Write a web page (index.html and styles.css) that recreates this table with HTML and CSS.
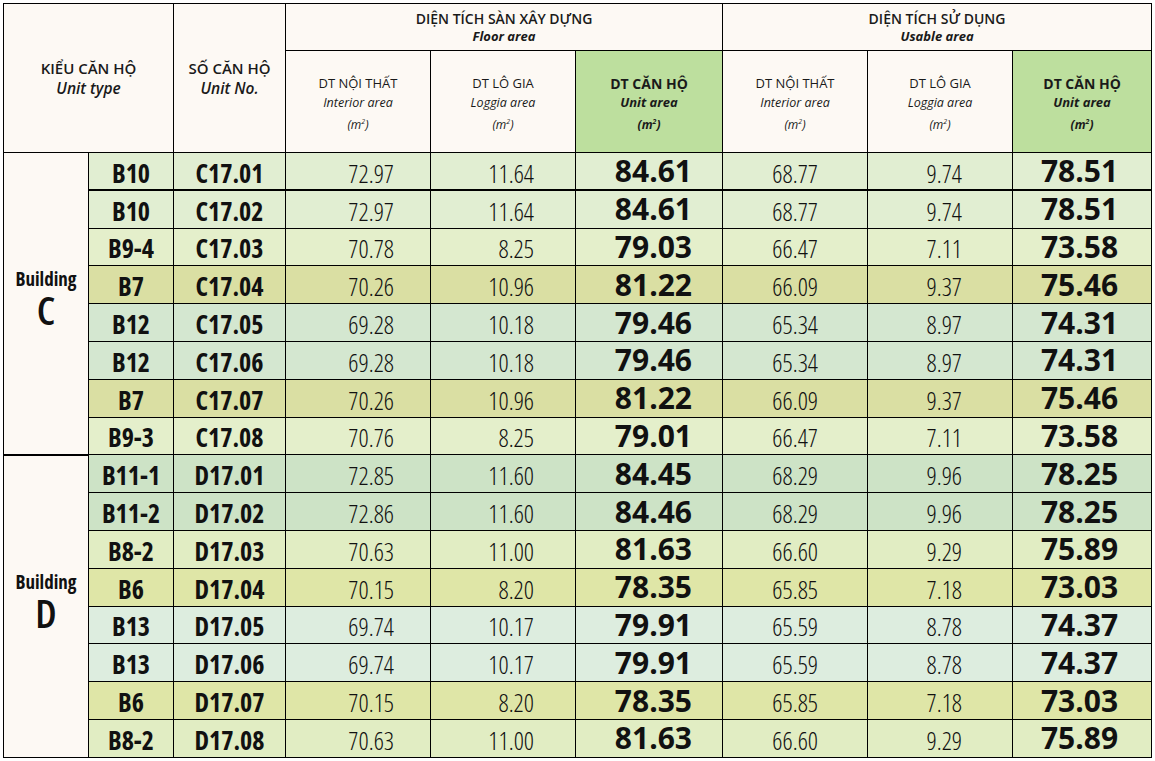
FILE: index.html
```html
<!DOCTYPE html>
<html lang="vi">
<head>
<meta charset="utf-8">
<title>Diện tích căn hộ</title>
<link rel="stylesheet" href="styles.css">
</head>
<body>
<table class="area-table">
  <colgroup>
    <col class="c-bld"><col class="c-type"><col class="c-no">
    <col class="c-val"><col class="c-val"><col class="c-main">
    <col class="c-val"><col class="c-val"><col class="c-last">
  </colgroup>
  <thead>
    <tr class="h1">
      <th colspan="2" rowspan="2" class="head-big"><span class="vn">KIỂU CĂN HỘ</span><span class="en">Unit type</span></th>
      <th rowspan="2" class="head-big"><span class="vn">SỐ CĂN HỘ</span><span class="en">Unit No.</span></th>
      <th colspan="3" class="group"><span class="vn">DIỆN TÍCH SÀN XÂY DỰNG</span><span class="en">Floor area</span></th>
      <th colspan="3" class="group"><span class="vn">DIỆN TÍCH SỬ DỤNG</span><span class="en">Usable area</span></th>
    </tr>
    <tr class="h2">
      <th class="sub"><span class="vn">DT NỘI THẤT</span><span class="en">Interior area</span><span class="unit">(m<sup>2</sup>)</span></th>
      <th class="sub"><span class="vn">DT LÔ GIA</span><span class="en">Loggia area</span><span class="unit">(m<sup>2</sup>)</span></th>
      <th class="sub hl"><span class="vn">DT CĂN HỘ</span><span class="en">Unit area</span><span class="unit">(m<sup>2</sup>)</span></th>
      <th class="sub"><span class="vn">DT NỘI THẤT</span><span class="en">Interior area</span><span class="unit">(m<sup>2</sup>)</span></th>
      <th class="sub"><span class="vn">DT LÔ GIA</span><span class="en">Loggia area</span><span class="unit">(m<sup>2</sup>)</span></th>
      <th class="sub hl"><span class="vn">DT CĂN HỘ</span><span class="en">Unit area</span><span class="unit">(m<sup>2</sup>)</span></th>
    </tr>
  </thead>
  <tbody>
    <tr class="r-b10 thick">
      <td rowspan="8" class="bld"><span class="bw">Building</span><span class="bl">C</span></td>
      <td class="ty">B10</td><td class="no">C17.01</td><td class="v1">72.97</td><td class="v2">11.64</td><td class="big v3">84.61</td><td class="v4">68.77</td><td class="v5">9.74</td><td class="big v6">78.51</td>
    </tr>
    <tr class="r-b10"><td class="ty">B10</td><td class="no">C17.02</td><td class="v1">72.97</td><td class="v2">11.64</td><td class="big v3">84.61</td><td class="v4">68.77</td><td class="v5">9.74</td><td class="big v6">78.51</td></tr>
    <tr class="r-b9"><td class="ty">B9-4</td><td class="no">C17.03</td><td class="v1">70.78</td><td class="v2">8.25</td><td class="big v3">79.03</td><td class="v4">66.47</td><td class="v5">7.11</td><td class="big v6">73.58</td></tr>
    <tr class="r-b7"><td class="ty">B7</td><td class="no">C17.04</td><td class="v1">70.26</td><td class="v2">10.96</td><td class="big v3">81.22</td><td class="v4">66.09</td><td class="v5">9.37</td><td class="big v6">75.46</td></tr>
    <tr class="r-b12"><td class="ty">B12</td><td class="no">C17.05</td><td class="v1">69.28</td><td class="v2">10.18</td><td class="big v3">79.46</td><td class="v4">65.34</td><td class="v5">8.97</td><td class="big v6">74.31</td></tr>
    <tr class="r-b12"><td class="ty">B12</td><td class="no">C17.06</td><td class="v1">69.28</td><td class="v2">10.18</td><td class="big v3">79.46</td><td class="v4">65.34</td><td class="v5">8.97</td><td class="big v6">74.31</td></tr>
    <tr class="r-b7"><td class="ty">B7</td><td class="no">C17.07</td><td class="v1">70.26</td><td class="v2">10.96</td><td class="big v3">81.22</td><td class="v4">66.09</td><td class="v5">9.37</td><td class="big v6">75.46</td></tr>
    <tr class="r-b9"><td class="ty">B9-3</td><td class="no">C17.08</td><td class="v1">70.76</td><td class="v2">8.25</td><td class="big v3">79.01</td><td class="v4">66.47</td><td class="v5">7.11</td><td class="big v6">73.58</td></tr>
    <tr class="r-b11">
      <td rowspan="8" class="bld"><span class="bw">Building</span><span class="bl">D</span></td>
      <td class="ty">B11-1</td><td class="no">D17.01</td><td class="v1">72.85</td><td class="v2">11.60</td><td class="big v3">84.45</td><td class="v4">68.29</td><td class="v5">9.96</td><td class="big v6">78.25</td>
    </tr>
    <tr class="r-b11"><td class="ty">B11-2</td><td class="no">D17.02</td><td class="v1">72.86</td><td class="v2">11.60</td><td class="big v3">84.46</td><td class="v4">68.29</td><td class="v5">9.96</td><td class="big v6">78.25</td></tr>
    <tr class="r-b8"><td class="ty">B8-2</td><td class="no">D17.03</td><td class="v1">70.63</td><td class="v2">11.00</td><td class="big v3">81.63</td><td class="v4">66.60</td><td class="v5">9.29</td><td class="big v6">75.89</td></tr>
    <tr class="r-b6"><td class="ty">B6</td><td class="no">D17.04</td><td class="v1">70.15</td><td class="v2">8.20</td><td class="big v3">78.35</td><td class="v4">65.85</td><td class="v5">7.18</td><td class="big v6">73.03</td></tr>
    <tr class="r-b13"><td class="ty">B13</td><td class="no">D17.05</td><td class="v1">69.74</td><td class="v2">10.17</td><td class="big v3">79.91</td><td class="v4">65.59</td><td class="v5">8.78</td><td class="big v6">74.37</td></tr>
    <tr class="r-b13"><td class="ty">B13</td><td class="no">D17.06</td><td class="v1">69.74</td><td class="v2">10.17</td><td class="big v3">79.91</td><td class="v4">65.59</td><td class="v5">8.78</td><td class="big v6">74.37</td></tr>
    <tr class="r-b6"><td class="ty">B6</td><td class="no">D17.07</td><td class="v1">70.15</td><td class="v2">8.20</td><td class="big v3">78.35</td><td class="v4">65.85</td><td class="v5">7.18</td><td class="big v6">73.03</td></tr>
    <tr class="r-b8"><td class="ty">B8-2</td><td class="no">D17.08</td><td class="v1">70.63</td><td class="v2">11.00</td><td class="big v3">81.63</td><td class="v4">66.60</td><td class="v5">9.29</td><td class="big v6">75.89</td></tr>
  </tbody>
</table>
</body>
</html>
```

FILE: styles.css
```css
html, body {
  margin: 0;
  padding: 0;
  background: #ffffff;
}
body {
  padding: 3px 4px 0 3px;
}
.area-table {
  border-collapse: collapse;
  table-layout: fixed;
  width: 1148px;
  font-family: "Open Sans", sans-serif;
  font-stretch: 75%;
  color: #111;
}
.c-bld { width: 85px; }
.c-type { width: 85px; }
.c-no { width: 112px; }
.c-val { width: 145px; }
.c-main { width: 147px; }
.c-last { width: 139px; }

.area-table th,
.area-table td {
  border: 1px solid #000;
  padding: 0;
  text-align: center;
  vertical-align: middle;
}
.area-table th {
  background: #fdf9f4;
  font-family: "Open Sans", "Lato", sans-serif;
  font-stretch: 100%;
  font-weight: 400;
  color: #1a1a1a;
}
.area-table th span { display: block; }
.h1 { height: 47px; }
.h2 { height: 102px; }

.head-big .vn {
  font-size: 15px;
  font-weight: 600;
  line-height: 20px;
}
.head-big .en {
  font-size: 15.5px;
  font-weight: 600;
  font-style: italic;
  line-height: 20px;
}
.group .vn {
  font-size: 14px;
  font-weight: 600;
  line-height: 19px;
}
.group .en {
  font-size: 13px;
  font-weight: 700;
  font-style: italic;
  line-height: 17px;
}
.sub .vn {
  font-size: 13px;
  line-height: 19px;
  padding-top: 4px;
}
.sub .en {
  font-size: 12.5px;
  font-style: italic;
  line-height: 19px;
}
.sub .unit {
  font-size: 12px;
  font-style: italic;
  line-height: 19px;
}
.sub sup {
  font-size: 7px;
  vertical-align: 5px;
}
.sub.hl {
  background: #bddf9e;
}
.sub.hl .vn {
  font-size: 14px;
  font-weight: 700;
}
.sub.hl .en {
  font-size: 13px;
  font-weight: 700;
}
.sub.hl .unit {
  font-weight: 700;
}

.area-table tbody tr { height: 37.8px; }
.area-table tbody td {
  font-size: 25px;
  line-height: 28px;
  font-weight: 350;
  font-stretch: 87%;
  padding-top: 3px;
}
.area-table tbody tr.thick td { border-bottom-width: 2px; }
.area-table td.ty,
.area-table td.no {
  font-weight: 700;
  font-size: 26px;
  font-stretch: 78%;
}
.area-table td.big {
  font-weight: 700;
  font-size: 30px;
  font-stretch: 94%;
  padding-top: 0;
}
.area-table td.v1 { text-align: right; padding-right: 36px; }
.area-table td.v2 { text-align: right; padding-right: 41px; }
.area-table td.v3 { text-align: right; padding-right: 30px; }
.area-table td.v4 { text-align: right; padding-right: 49px; }
.area-table td.v5 { text-align: right; padding-right: 50px; }
.area-table td.v6 { text-align: right; padding-right: 33px; }

.area-table td.bld {
  background: #fdf9f4;
  border-bottom-width: 1px;
  padding: 0 0 12px 0;
}
.bld span { display: block; }
.bw {
  font-size: 19px;
  font-weight: 700;
  font-stretch: 87.5%;
  line-height: 26px;
}
.bl {
  font-size: 40px;
  font-weight: 600;
  font-stretch: 80%;
  line-height: 36px;
}

.r-b10 td { background: #e1eed2; }
.r-b9 td { background: #e4efcb; }
.r-b7 td { background: #dadfa3; }
.r-b12 td { background: #d4e7d0; }
.r-b11 td { background: #cde3c6; }
.r-b8 td { background: #e1edc3; }
.r-b6 td { background: #dfe6a7; }
.r-b13 td { background: #ddeddf; }
```
